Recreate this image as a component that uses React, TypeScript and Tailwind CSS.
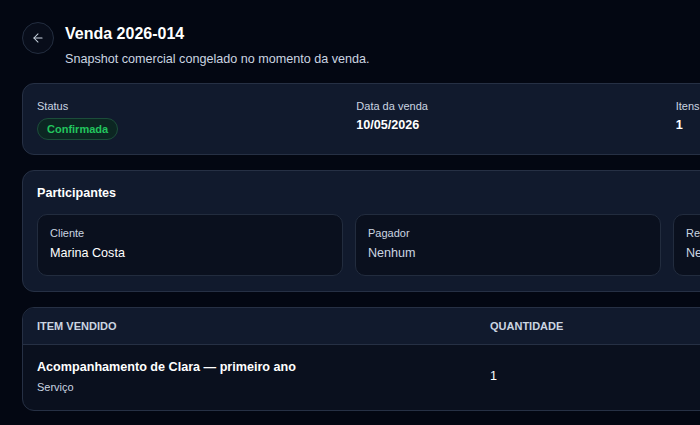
import { ArrowLeft } from 'lucide-react';

const SUMMARY = [
  { label: 'Status', badge: 'Confirmada' },
  { label: 'Data da venda', value: '10/05/2026' },
  { label: 'Itens', value: '1' },
];

const PARTICIPANTS = [
  { label: 'Cliente', value: 'Marina Costa', muted: false },
  { label: 'Pagador', value: 'Nenhum', muted: true },
  { label: 'Responsável', value: 'Nenhum', muted: true },
];

export default function App() {
  return (
    <div className="min-h-screen overflow-hidden bg-[#030712] font-['Liberation_Sans',Arial,sans-serif] text-white">
      <div className="w-[1016px] px-[22px] pt-[22px] pb-8">
        <header className="flex items-start gap-[11px]">
          <button className="flex h-8 w-8 shrink-0 items-center justify-center rounded-full border border-[#232d3f] bg-[#080d1a] text-[#cbd5e1]">
            <ArrowLeft size={14} strokeWidth={1.75} />
          </button>
          <div>
            <h1 className="text-base font-bold leading-6 text-white">
              Venda 2026-014
            </h1>
            <p className="mt-[3px] text-[12.6px] leading-5 text-[#cbd5e1]">
              Snapshot comercial congelado no momento da venda.
            </p>
          </div>
        </header>

        <div className="mt-[14px] flex w-[972px] flex-col gap-[15px]">
          <section className="rounded-xl border border-[#263044] bg-[#111a2d] px-[14px] py-[14px]">
            <div className="grid grid-cols-3 gap-4">
              {SUMMARY.map((s) => (
                <div key={s.label}>
                  <p className="text-[11px] leading-4 text-[#cbd5e1]">{s.label}</p>
                  {s.badge ? (
                    <span className="mt-1 inline-flex h-[22px] items-center rounded-full border border-[#1c4d3a] bg-[#0c2622] px-[9px] text-[11px] font-bold text-[#22c55e]">
                      {s.badge}
                    </span>
                  ) : (
                    <p className="mt-[2px] text-[12.6px] font-bold leading-[18px] text-white">
                      {s.value}
                    </p>
                  )}
                </div>
              ))}
            </div>
          </section>

          <section className="rounded-xl border border-[#263044] bg-[#111a2d] px-[14px] pt-3 pb-[15px]">
            <h2 className="text-[12.6px] font-bold leading-5 text-white">Participantes</h2>
            <div className="mt-[11px] grid grid-cols-3 gap-3">
              {PARTICIPANTS.map((p) => (
                <div
                  key={p.label}
                  className="rounded-[10px] border border-[#222c3e] bg-[#0a101e] px-3 pt-[10px] pb-3"
                >
                  <p className="text-[11px] leading-4 text-[#cbd5e1]">{p.label}</p>
                  <p
                    className={`mt-[2px] text-[12.6px] leading-5 ${
                      p.muted ? 'text-[#cbd5e1]' : 'text-white'
                    }`}
                  >
                    {p.value}
                  </p>
                </div>
              ))}
            </div>
          </section>

          <section className="overflow-hidden rounded-xl border border-[#263044] bg-[#0a101e]">
            <div className="grid grid-cols-[453px_1fr] border-b border-[#263044] bg-[#111a2d] px-[14px] py-[10px]">
              <span className="text-[11px] font-bold uppercase leading-4 text-[#cbd5e1]">
                Item vendido
              </span>
              <span className="text-[11px] font-bold uppercase leading-4 text-[#cbd5e1]">
                Quantidade
              </span>
            </div>
            <div className="grid grid-cols-[453px_1fr] items-center px-[14px] pt-[12px] pb-[15px]">
              <div>
                <p className="text-[12.6px] font-bold leading-5 text-white">
                  Acompanhamento de Clara — primeiro ano
                </p>
                <p className="mt-[2px] text-[11px] leading-4 text-[#cbd5e1]">Serviço</p>
              </div>
              <span className="text-[12.6px] leading-5 text-white">1</span>
            </div>
          </section>
        </div>
      </div>
    </div>
  );
}
